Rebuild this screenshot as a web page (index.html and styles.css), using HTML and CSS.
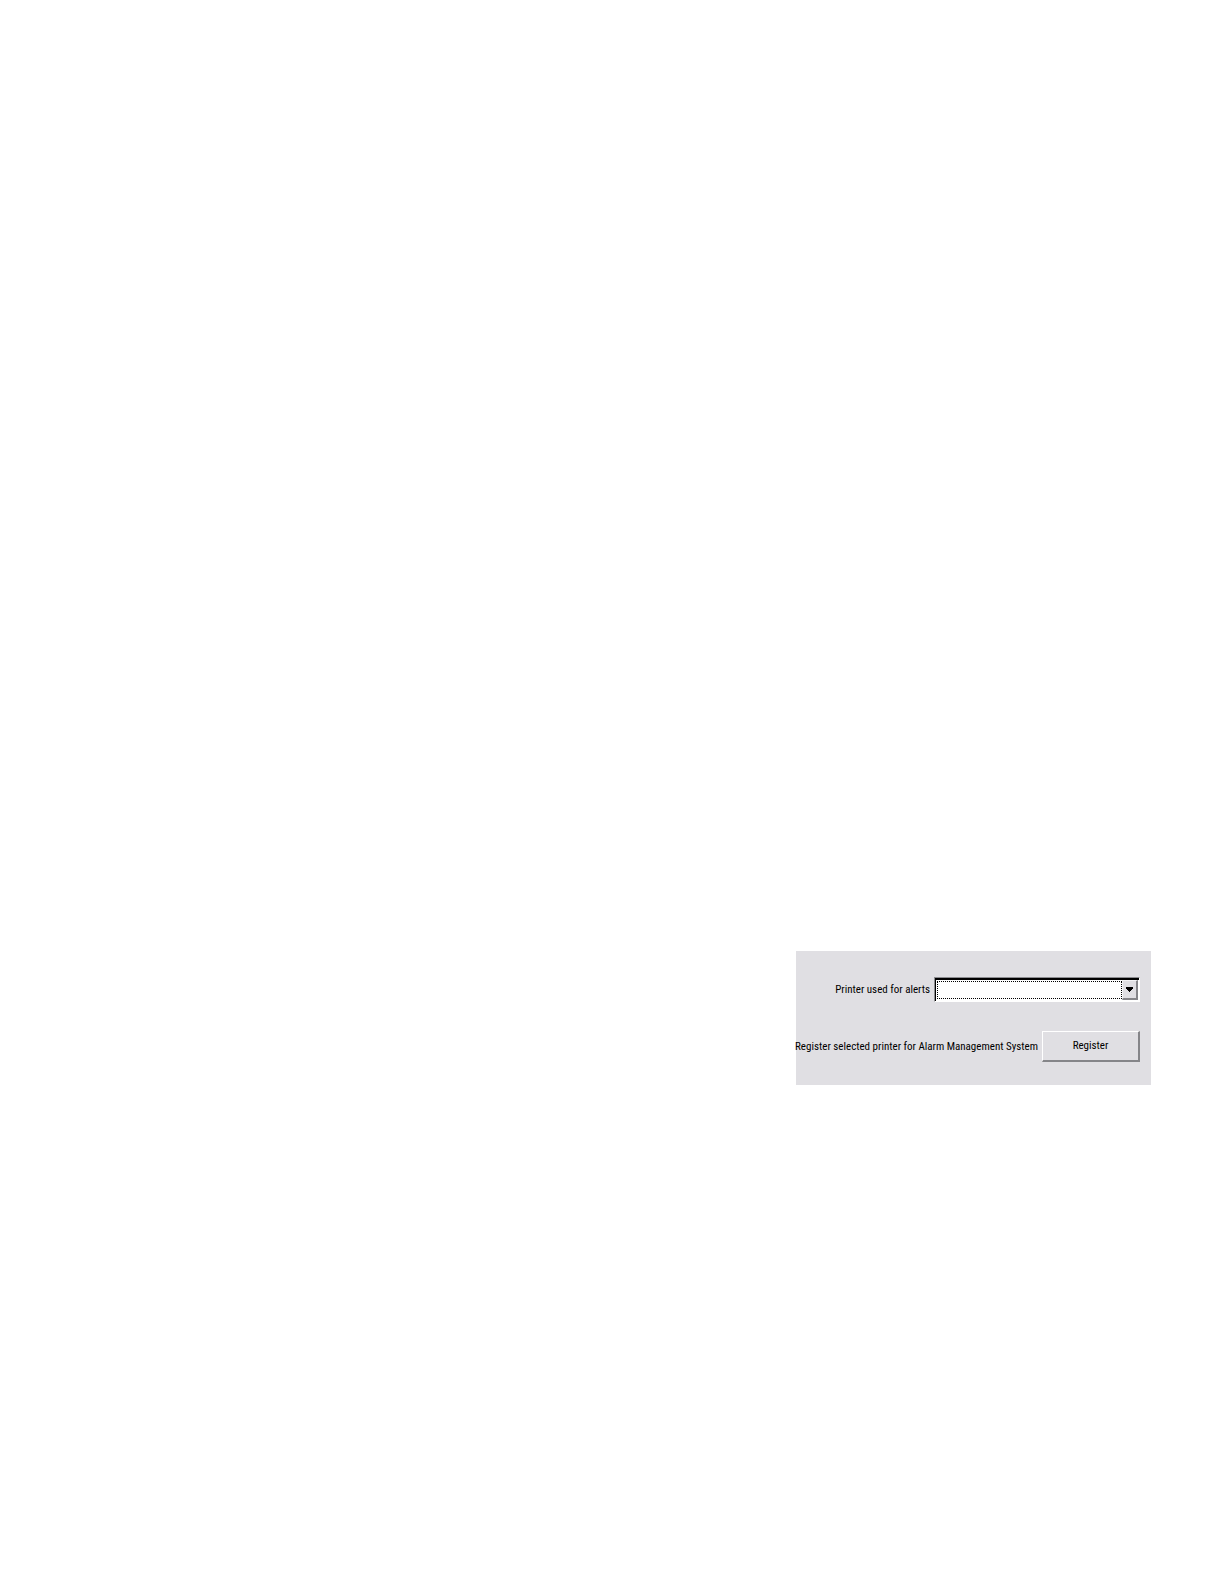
FILE: index.html
```html
<!DOCTYPE html>
<html lang="en">
<head>
<meta charset="utf-8">
<title>Alarm printer</title>
<link rel="stylesheet" href="styles.css">
</head>
<body>
<main class="page">
  <form class="panel">
    <div class="row">
      <label class="caption" for="printer">Printer used for alerts</label>
      <div class="combo">
        <select class="combo-field" id="printer"><option></option></select>
        <span class="combo-focus"></span>
        <span class="combo-arrow"><svg width="7" height="5" viewBox="0 0 7 5" aria-hidden="true"><path d="M0 0h7v2H6v1H5v1H4v1H3V4H2V3H1V2H0z"/></svg></span>
      </div>
    </div>
    <div class="row">
      <label class="caption" for="register">Register selected printer for Alarm Management System</label>
      <button class="push" id="register" type="button">Register</button>
    </div>
  </form>
</main>
</body>
</html>
```
FILE: styles.css
```css
* {
  box-sizing: border-box;
}

body {
  margin: 0;
  background: #fff;
  color: #000;
  font: 11px/16px "Roboto Condensed", "Liberation Sans", sans-serif;
}

.page {
  display: flex;
  min-height: 100vh;
  justify-content: flex-end;
  align-items: flex-end;
  padding: 0 73px 499px 0;
}

.panel {
  display: flex;
  flex-direction: column;
  gap: 29px;
  width: 355px;
  padding: 26px 11px 23px 0;
  background: #e0dfe3;
}

.row {
  display: flex;
  align-items: center;
  justify-content: flex-end;
  gap: 4px;
}

.caption {
  white-space: nowrap;
}

.combo {
  position: relative;
  flex: none;
  width: 206px;
}

.combo-field {
  display: block;
  appearance: none;
  width: 100%;
  height: 25px;
  padding: 0 20px 0 4px;
  border: 1px solid #fff;
  border-top-color: #8c8c90;
  border-left-color: #8c8c90;
  border-radius: 0;
  outline: none;
  background: #fff;
  box-shadow: inset 1px 2px #000;
  font: inherit;
}

.combo-focus {
  position: absolute;
  top: 4px;
  right: 18px;
  bottom: 3px;
  left: 3px;
  border: 1px dotted #000;
  pointer-events: none;
}

.combo-arrow {
  position: absolute;
  top: 3px;
  right: 2px;
  bottom: 2px;
  display: flex;
  align-items: center;
  justify-content: center;
  width: 16px;
  border: 1px solid #f4f4f6;
  border-right: 2px solid #858589;
  border-bottom: 2px solid #858589;
  background: #e0dfe3;
  pointer-events: none;
}

.push {
  flex: none;
  width: 98px;
  height: 31px;
  padding: 0;
  border: 1px solid #fff;
  border-right: 2px solid #858589;
  border-bottom: 2px solid #858589;
  border-radius: 0;
  background: #e0dfe3;
  color: inherit;
  font: inherit;
}
```
